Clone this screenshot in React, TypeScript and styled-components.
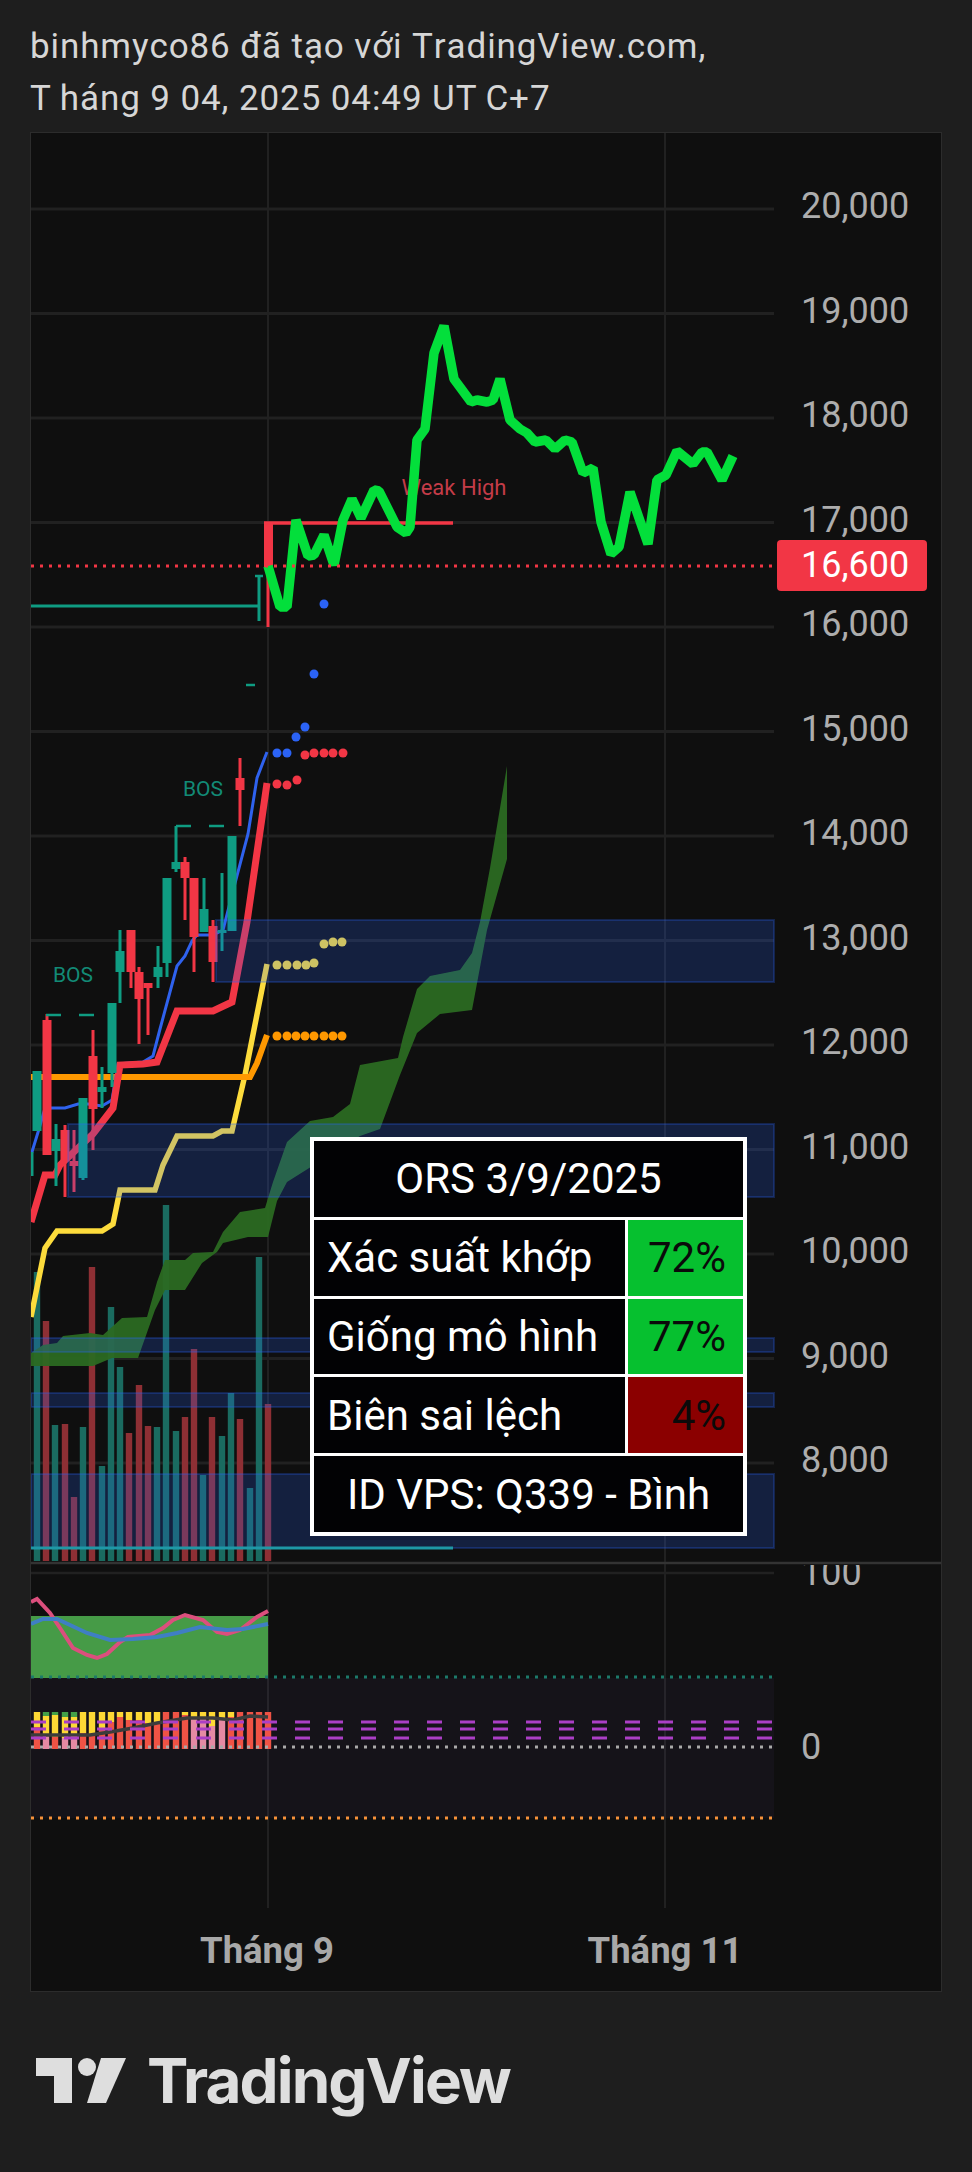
import React from 'react'
import styled, { createGlobalStyle } from 'styled-components'

const GlobalStyle = createGlobalStyle`
  html, body {
    margin: 0;
    padding: 0;
    background: #1e1e1e;
  }
`

const TEAL = '#0f9c82'
const RED = '#f23645'
const FONT = `Roboto, 'Noto Sans', sans-serif`

const Page = styled.div`
  width: 972px;
  height: 2172px;
  box-sizing: border-box;
  padding: 21px 30px 0;
  background: #1e1e1e;
  font-family: ${FONT};
  overflow: hidden;
`

const Header = styled.div`
  height: 111px;
  font-size: 35px;
  line-height: 52px;
  letter-spacing: 0.9px;
  color: #d6d6d6;
  font-kerning: none;
  white-space: nowrap;
`

const LooseT = styled.span`
  margin-right: 8px;
`

const ChartFrame = styled.div`
  position: relative;
  width: 912px;
  height: 1860px;
  box-sizing: border-box;
  border: 1px solid #2c2c2c;
  background: #0f0f0f;
`

const ChartSvg = styled.svg`
  display: block;
  width: 910px;
  height: 1858px;
`

const AxisLabel = styled.text`
  font-family: ${FONT};
  font-size: 36px;
  fill: #adadad;
  dominant-baseline: central;
`

const PriceTagLabel = styled(AxisLabel)`
  fill: #ffffff;
`

const TimeLabel = styled.text`
  font-family: ${FONT};
  font-size: 36.5px;
  font-weight: 700;
  fill: #a8a8a8;
  text-anchor: middle;
  dominant-baseline: central;
`

const ChartNote = styled.text<{ $color: string; $size: number }>`
  font-family: ${FONT};
  font-size: ${(p) => p.$size}px;
  fill: ${(p) => p.$color};
  text-anchor: middle;
  dominant-baseline: central;
`

const StatsTable = styled.div`
  position: absolute;
  left: 279px;
  top: 1004px;
  width: 437px;
  height: 399px;
  box-sizing: border-box;
  display: grid;
  grid-template-columns: 1fr 115px;
  grid-template-rows: repeat(5, 1fr);
  gap: 3px;
  border: 4px solid #ffffff;
  background: #ffffff;
  font-size: 42px;
`

const TitleCell = styled.div`
  grid-column: 1 / 3;
  display: flex;
  align-items: center;
  justify-content: center;
  background: #020204;
  color: #ffffff;
`

const LabelCell = styled.div`
  display: flex;
  align-items: center;
  padding-left: 13px;
  background: #020204;
  color: #ffffff;
  white-space: nowrap;
`

const ValueCell = styled.div<{ $bg: string }>`
  display: flex;
  align-items: center;
  justify-content: flex-end;
  padding-right: 17px;
  background: ${(p) => p.$bg};
  color: #0a0a0a;
`

const Footer = styled.div`
  display: flex;
  align-items: center;
  gap: 21px;
  margin: 66px 0 0 6px;
  color: #dedede;
`

const LogoText = styled.span`
  font-family: Inter, sans-serif;
  font-size: 62px;
  line-height: 45px;
  font-weight: 700;
  letter-spacing: -1.9px;
`

type Pt = [number, number]

const pts = (list: Pt[]) => list.map((p) => p.join(',')).join(' ')

const priceLevels = [
  '20,000', '19,000', '18,000', '17,000', '16,000', '15,000', '14,000',
  '13,000', '12,000', '11,000', '10,000', '9,000', '8,000',
]

const gridY = (i: number) => 209 + i * 104.5

// cx, wick top, wick bottom, body top, body bottom, up
const candles: [number, number, number, number, number, boolean][] = [
  [37, 1071, 1131, 1071, 1131, true],
  [47, 1014, 1155, 1020, 1155, false],
  [56, 1124, 1186, 1139, 1151, true],
  [65, 1125, 1197, 1130, 1161, false],
  [74, 1130, 1192, 1161, 1166, false],
  [83, 1098, 1180, 1098, 1178, true],
  [93, 1030, 1150, 1056, 1109, false],
  [102, 1067, 1108, 1087, 1092, true],
  [112, 1003, 1087, 1003, 1073, true],
  [120, 930, 1003, 951, 972, true],
  [131, 930, 988, 930, 972, false],
  [139, 967, 1044, 972, 999, false],
  [148, 983, 1035, 983, 988, false],
  [158, 946, 988, 967, 977, true],
  [167, 878, 977, 878, 963, true],
  [176, 826, 872, 862, 869, true],
  [185, 857, 920, 862, 878, false],
  [194, 878, 972, 878, 937, false],
  [204, 878, 932, 909, 932, true],
  [213, 920, 982, 926, 962, false],
  [222, 873, 951, 930, 932, true],
  [232, 836, 931, 836, 931, true],
  [240, 758, 826, 778, 790, false],
]

// cx, top, up
const volumes: [number, number, boolean][] = [
  [37, 1272, true], [46, 1321, false], [55, 1425, true], [65, 1424, false],
  [74, 1497, false], [83, 1427, true], [92, 1267, false], [102, 1466, true],
  [111, 1307, true], [120, 1367, true], [129, 1433, false], [139, 1385, false],
  [148, 1426, false], [157, 1427, true], [166, 1205, true], [176, 1431, true],
  [185, 1417, false], [194, 1349, false], [203, 1475, true], [212, 1417, false],
  [222, 1436, true], [231, 1393, true], [240, 1419, false], [250, 1488, true],
  [259, 1257, true], [268, 1404, false],
]

// cx, green end, yellow end, colour of the lower part
const RSI_RED = '#ef5345'
const RSI_PINK = '#e58aa3'
const stacks: [number, number, number, string][] = [
  [37, 1712, 1727, RSI_RED], [46, 1716, 1735, RSI_PINK], [55, 1715, 1737, RSI_RED],
  [65, 1717, 1738, RSI_PINK], [74, 1717, 1737, RSI_PINK], [83, 1712, 1733, RSI_RED],
  [92, 1712, 1735, RSI_RED], [102, 1712, 1730, RSI_RED], [111, 1712, 1722, RSI_RED],
  [120, 1712, 1717, RSI_RED], [129, 1712, 1720, RSI_RED], [139, 1712, 1720, RSI_RED],
  [148, 1712, 1723, RSI_RED], [157, 1712, 1722, RSI_RED], [166, 1712, 1712, RSI_RED],
  [176, 1712, 1712, RSI_RED], [185, 1712, 1715, RSI_RED], [194, 1712, 1717, RSI_PINK],
  [203, 1712, 1717, RSI_PINK], [212, 1712, 1726, RSI_PINK], [222, 1712, 1718, RSI_PINK],
  [231, 1712, 1717, RSI_RED], [240, 1712, 1712, RSI_RED], [250, 1712, 1712, RSI_RED],
  [259, 1712, 1712, RSI_RED], [268, 1712, 1712, RSI_RED],
]

const cloud: Pt[] = [
  [507, 766], [490, 868], [480, 922], [472, 953], [460, 970], [430, 976], [417, 989],
  [403, 1037], [398, 1058], [360, 1065], [350, 1104], [333, 1117], [310, 1121],
  [287, 1142], [273, 1182], [265, 1208], [240, 1212], [223, 1232], [213, 1252],
  [193, 1253], [185, 1260], [165, 1260], [157, 1282], [147, 1317], [122, 1318],
  [103, 1335], [90, 1333], [63, 1336], [57, 1343], [43, 1345], [31, 1353],
  [31, 1366], [93, 1366], [112, 1358], [138, 1358], [155, 1310], [165, 1290],
  [185, 1290], [202, 1263], [217, 1252], [223, 1243], [248, 1237], [268, 1237],
  [277, 1201], [287, 1182], [360, 1136], [380, 1129], [400, 1075], [417, 1033],
  [440, 1014], [472, 1010], [487, 930], [507, 859],
]

const blueLine: Pt[] = [
  [31, 1155], [39, 1129], [45, 1108], [65, 1108], [78, 1104], [88, 1104], [102, 1106],
  [112, 1100], [118, 1064], [143, 1062], [153, 1056], [160, 1029], [177, 966], [185, 956],
  [192, 941], [197, 935], [213, 935], [223, 930], [233, 891], [248, 834], [257, 778], [267, 752],
]

const redLine: Pt[] = [
  [31, 1222], [45, 1175], [55, 1175], [60, 1165], [93, 1134], [113, 1108], [120, 1065],
  [143, 1064], [157, 1062], [177, 1011], [213, 1011], [232, 1002], [247, 922], [267, 783],
]

const yellowLine: Pt[] = [
  [31, 1317], [45, 1248], [57, 1231], [102, 1231], [113, 1224], [120, 1190], [155, 1190],
  [163, 1165], [177, 1136], [213, 1136], [222, 1131], [232, 1131], [245, 1075], [267, 964],
]

const orangeLine: Pt[] = [[31, 1077], [250, 1077], [257, 1063], [267, 1035]]

const greenLine: Pt[] = [
  [268, 566], [280, 607], [287, 607], [296, 520], [308, 556], [314, 555], [324, 535], [334, 565],
  [343, 520], [352, 499], [361, 518], [374, 490], [379, 491], [397, 527], [406, 533], [410, 527],
  [417, 440], [425, 429], [434, 353], [444, 326], [454, 379], [471, 402], [477, 400], [487, 402],
  [493, 400], [500, 379], [510, 420], [520, 429], [527, 433], [535, 442], [546, 440], [555, 449],
  [565, 440], [572, 442], [583, 473], [593, 468], [601, 522], [611, 554], [619, 547], [630, 492],
  [648, 544], [657, 480], [666, 475], [677, 451], [693, 464], [702, 452], [707, 452], [722, 480],
  [733, 456],
]

const pinkOsc: Pt[] = [
  [31, 1602], [37, 1599], [50, 1613], [60, 1628], [73, 1648], [87, 1655], [97, 1658], [107, 1654],
  [120, 1642], [128, 1637], [150, 1635], [163, 1628], [173, 1620], [185, 1615], [203, 1620],
  [217, 1632], [227, 1634], [240, 1630], [257, 1617], [268, 1611],
]

const blueOsc: Pt[] = [
  [31, 1624], [43, 1619], [57, 1619], [70, 1625], [87, 1633], [110, 1640], [133, 1639], [157, 1637],
  [177, 1633], [200, 1627], [227, 1630], [243, 1629], [268, 1624],
]

const darkOsc: Pt[] = [
  [31, 1735], [90, 1735], [110, 1732], [133, 1728], [157, 1723], [187, 1718], [213, 1718],
  [233, 1720], [250, 1716], [268, 1717],
]

// x start, y top, x end, y bottom
const zones: [number, number, number, number][] = [
  [216, 920, 774, 982],
  [68, 1124, 774, 1197],
  [31, 1338, 774, 1352],
  [31, 1393, 774, 1407],
  [31, 1474, 774, 1548],
]

const dots: [string, Pt[]][] = [
  ['#2b63f6', [[324, 604], [314, 674], [305, 727], [296, 737], [287, 753], [277, 753]]],
  [RED, [[305, 755], [314, 753], [324, 753], [333, 753], [343, 753], [277, 784], [287, 785], [297, 780]]],
  ['#f7da3c', [[277, 965], [287, 965], [297, 965], [306, 965], [314, 963], [324, 944], [333, 942], [342, 942]]],
  ['#ff9800', [[277, 1036], [287, 1036], [296, 1036], [305, 1036], [314, 1036], [324, 1036], [333, 1036], [342, 1036]]],
]

const Chart = () => (
  <ChartSvg viewBox="31 133 910 1858">
    <defs>
      <clipPath id="oscPane">
        <rect x="774" y="1565" width="160" height="60" />
      </clipPath>
    </defs>

    {priceLevels.map((_, i) => (
      <line key={i} x1="31" x2="774" y1={gridY(i)} y2={gridY(i)} stroke="#212121" strokeWidth="3" />
    ))}
    <line x1="268" x2="268" y1="133" y2="1908" stroke="#212121" strokeWidth="2" />
    <line x1="665" x2="665" y1="133" y2="1908" stroke="#212121" strokeWidth="2" />

    {volumes.map(([x, top, up]) => (
      <rect key={x} x={x - 3.2} y={top} width="6.4" height={1561 - top} fill={up ? '#1a6b60' : '#8e2f34'} />
    ))}

    <polygon points={pts(cloud)} fill="#2b6a22" fillOpacity="0.95" />

    <polyline points={pts(yellowLine)} fill="none" stroke="#fddc3c" strokeWidth="5.5" />
    <polyline points={pts(orangeLine)} fill="none" stroke="#ff9800" strokeWidth="6" />
    <polyline points={pts(blueLine)} fill="none" stroke="#2f62ee" strokeWidth="3" />
    <polyline points={pts(redLine)} fill="none" stroke={RED} strokeWidth="7" />

    <line x1="32" x2="32" y1="1152" y2="1176" stroke={TEAL} strokeWidth="3" />
    {candles.map(([x, wickTop, wickBottom, bodyTop, bodyBottom, up]) => (
      <g key={x} fill={up ? TEAL : RED}>
        <rect x={x - 1.5} y={wickTop} width="3" height={wickBottom - wickTop} />
        <rect x={x - 4.5} y={bodyTop} width="9" height={Math.max(bodyBottom - bodyTop, 3)} />
      </g>
    ))}
    <rect x="264" y="523" width="9" height="44" fill={RED} />
    <rect x="266.5" y="567" width="3" height="60" fill={RED} />
    <line x1="264" x2="453" y1="523" y2="523" stroke={RED} strokeWidth="3.5" />

    <g stroke={TEAL} strokeWidth="2.5">
      <line x1="46" x2="61" y1="1015" y2="1015" />
      <line x1="79" x2="94" y1="1015" y2="1015" />
      <line x1="176" x2="191" y1="826" y2="826" />
      <line x1="209" x2="224" y1="826" y2="826" />
      <line x1="31" x2="259" y1="606" y2="606" strokeWidth="3" />
      <line x1="259" x2="259" y1="576" y2="621" strokeWidth="3" />
      <line x1="255" x2="263" y1="576" y2="576" />
      <line x1="246" x2="255" y1="685" y2="685" />
    </g>

    <ChartNote x="73" y="975" $color="#128a76" $size={21}>BOS</ChartNote>
    <ChartNote x="203" y="789" $color="#128a76" $size={21}>BOS</ChartNote>
    <ChartNote x="454" y="487" $color="#c43c48" $size={22}>Weak High</ChartNote>

    {dots.map(([color, list]) =>
      list.map(([x, y]) => <circle key={`${color}-${x}-${y}`} cx={x} cy={y} r="4.5" fill={color} />),
    )}

    {zones.map(([x1, y1, x2, y2]) => (
      <rect
        key={y1}
        x={x1}
        y={y1}
        width={x2 - x1}
        height={y2 - y1}
        fill="#2962ff"
        fillOpacity="0.2"
        stroke="#2962ff"
        strokeOpacity="0.25"
        strokeWidth="2"
      />
    ))}
    <line x1="31" x2="453" y1="1548" y2="1548" stroke="#1e98a6" strokeWidth="3" />

    <polyline points={pts(greenLine)} fill="none" stroke="#03df3b" strokeWidth="9.5" strokeLinejoin="bevel" />
    <line x1="31" x2="774" y1="566" y2="566" stroke={RED} strokeWidth="3" strokeDasharray="3 6" />

    <line x1="31" x2="941" y1="1563" y2="1563" stroke="#333333" strokeWidth="2.5" />
    <line x1="31" x2="774" y1="1573" y2="1573" stroke="#212121" strokeWidth="2.5" />

    <rect x="31" y="1678" width="743" height="140" fill="#7e57c2" fillOpacity="0.06" />
    <rect x="31" y="1616" width="237" height="62" fill="#469b47" />
    <polyline points={pts(pinkOsc)} fill="none" stroke="#dc4f7d" strokeWidth="4" />
    <polyline points={pts(blueOsc)} fill="none" stroke="#3f7fc4" strokeWidth="4" />

    {stacks.map(([x, greenEnd, yellowEnd, lower]) => (
      <g key={x}>
        <rect x={x - 3.2} y="1712" width="6.4" height={greenEnd - 1712} fill="#43a047" />
        <rect x={x - 3.2} y={greenEnd} width="6.4" height={yellowEnd - greenEnd} fill="#fdd835" />
        <rect x={x - 3.2} y={yellowEnd} width="6.4" height={1749 - yellowEnd} fill={lower} />
      </g>
    ))}
    <polyline points={pts(darkOsc)} fill="none" stroke="#3c3c3c" strokeWidth="3.5" />

    {[1722, 1729, 1738].map((y) => (
      <line key={y} x1="31" x2="774" y1={y} y2={y} stroke="#ab3fc6" strokeWidth="3" strokeDasharray="15 18" />
    ))}
    <line x1="31" x2="774" y1="1677" y2="1677" stroke="#1c7a6a" strokeWidth="3" strokeDasharray="3 6" />
    <line x1="31" x2="774" y1="1747" y2="1747" stroke="#a9a9a9" strokeWidth="3" strokeDasharray="3 6" />
    <line x1="31" x2="774" y1="1818" y2="1818" stroke="#f7923a" strokeWidth="3" strokeDasharray="3 6" />

    {priceLevels.map((label, i) => (
      <AxisLabel key={label} x="801" y={gridY(i) - 3}>{label}</AxisLabel>
    ))}
    <rect x="777" y="540" width="150" height="51" rx="4" fill={RED} />
    <PriceTagLabel x="801" y="565">16,600</PriceTagLabel>
    <AxisLabel x="801" y="1573" clipPath="url(#oscPane)">100</AxisLabel>
    <AxisLabel x="801" y="1747">0</AxisLabel>

    <TimeLabel x="267" y="1950">Tháng 9</TimeLabel>
    <TimeLabel x="665" y="1950">Tháng 11</TimeLabel>
  </ChartSvg>
)

const Logo = () => (
  <svg width="90" height="45" viewBox="0 0 90 45">
    <path d="M0 0H36V45H18V18H0Z" fill="currentColor" />
    <circle cx="51" cy="9" r="9" fill="currentColor" />
    <path d="M65 0H90L70 45H51Z" fill="currentColor" />
  </svg>
)

export default function App() {
  return (
    <Page>
      <GlobalStyle />
      <Header>
        binhmyco86 đã tạo với TradingView.com,
        <br />
        <LooseT>T</LooseT>háng 9 04, 2025 04:49 U<LooseT>T</LooseT>C+7
      </Header>
      <ChartFrame>
        <Chart />
        <StatsTable>
          <TitleCell>ORS 3/9/2025</TitleCell>
          <LabelCell>Xác suất khớp</LabelCell>
          <ValueCell $bg="#06c02f">72%</ValueCell>
          <LabelCell>Giống mô hình</LabelCell>
          <ValueCell $bg="#06c02f">77%</ValueCell>
          <LabelCell>Biên sai lệch</LabelCell>
          <ValueCell $bg="#8b0000">4%</ValueCell>
          <TitleCell>ID VPS: Q339 - Bình</TitleCell>
        </StatsTable>
      </ChartFrame>
      <Footer>
        <Logo />
        <LogoText>TradingView</LogoText>
      </Footer>
    </Page>
  )
}
